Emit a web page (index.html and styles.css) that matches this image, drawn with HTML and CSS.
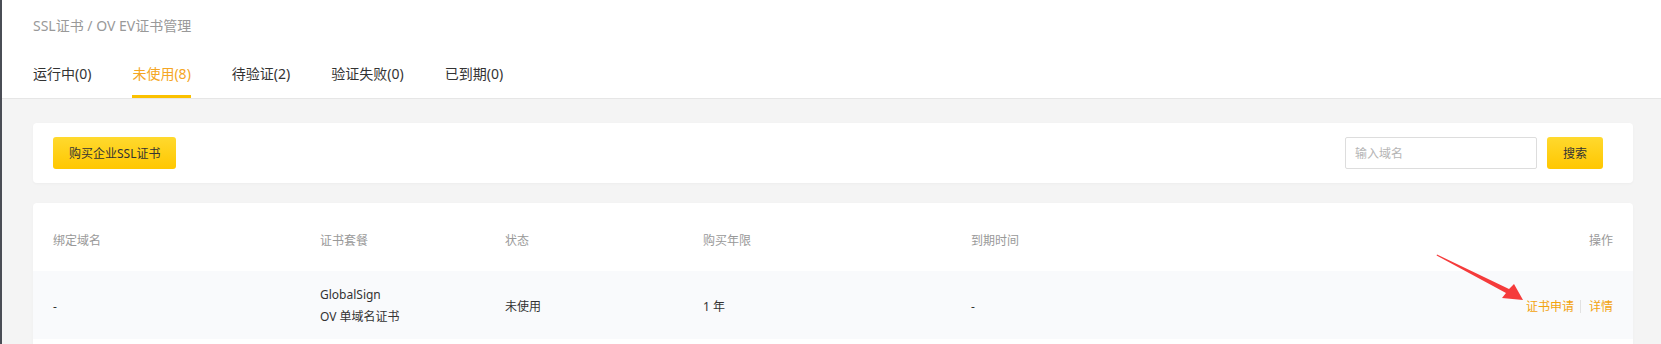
FILE: index.html
```html
<!DOCTYPE html>
<html lang="zh-CN">
<head>
<meta charset="utf-8">
<title>OV EV证书管理</title>
<link rel="stylesheet" href="styles.css">
</head>
<body>
<div class="page">
  <header class="header">
    <div class="breadcrumb">SSL证书 / OV EV证书管理</div>
    <nav class="tabs">
      <span class="tab">运行中(0)</span>
      <span class="tab active">未使用(8)</span>
      <span class="tab">待验证(2)</span>
      <span class="tab">验证失败(0)</span>
      <span class="tab">已到期(0)</span>
    </nav>
  </header>
  <main class="main">
    <section class="card toolbar">
      <button class="btn">购买企业SSL证书</button>
      <div class="search">
        <input class="search-input" type="text" placeholder="输入域名">
        <button class="btn btn-search">搜索</button>
      </div>
    </section>
    <section class="card table">
      <div class="row head">
        <div>绑定域名</div>
        <div>证书套餐</div>
        <div>状态</div>
        <div>购买年限</div>
        <div>到期时间</div>
        <div class="ops">操作</div>
      </div>
      <div class="row data">
        <div>-</div>
        <div class="pkg"><div>GlobalSign</div><div>OV 单域名证书</div></div>
        <div>未使用</div>
        <div>1 年</div>
        <div>-</div>
        <div class="ops"><a class="link">证书申请</a><span class="sep"></span><a class="link">详情</a></div>
      </div>
    </section>
  </main>
  <svg class="arrow" width="100" height="55" viewBox="1430 250 100 55" aria-hidden="true">
    <polygon points="1437,254.4 1509,289 1514,284 1523,300 1502,298 1506,293 1436.6,255.6" fill="#f53b3b"/>
  </svg>
</div>
</body>
</html>
```
FILE: styles.css
```css
* { box-sizing: border-box; }
html, body { margin: 0; padding: 0; }
body {
  font-family: "Noto Sans", "Noto Sans CJK SC", sans-serif;
  color: #333;
  background: #f4f4f4;
}
.page {
  position: relative;
  min-height: 344px;
  border-left: 2px solid #4a4d55;
  background: #f4f4f4;
}
.header {
  background: #fff;
  padding: 16px 0 0 31px;
  border-bottom: 1px solid #e6e6e6;
}
.breadcrumb {
  font-size: 14px;
  line-height: 20px;
  color: #999;
}
.tabs {
  display: flex;
  gap: 41px;
  margin-top: 13px;
}
.tab {
  font-size: 14px;
  line-height: 20px;
  padding: 15px 0 11px;
  border-bottom: 3px solid transparent;
  color: #333;
}
.tab.active {
  color: #f5a623;
  border-bottom-color: #fbc100;
}
.main {
  padding: 24px 28px 0 31px;
  display: flex;
  flex-direction: column;
  gap: 20px;
}
.card {
  background: #fff;
  border-radius: 4px;
  box-shadow: 0 1px 3px rgba(0,0,0,0.03);
}
.toolbar {
  display: flex;
  justify-content: space-between;
  align-items: center;
  padding: 14px 30px 14px 20px;
}
.btn {
  height: 32px;
  padding: 0 16px;
  border: none;
  border-radius: 3px;
  background: linear-gradient(#ffd92e, #ffc700);
  font-family: inherit;
  font-size: 12px;
  color: #333;
}
.search {
  display: flex;
  gap: 10px;
}
.search-input {
  width: 192px;
  height: 32px;
  border: 1px solid #ddd;
  border-radius: 2px;
  padding: 0 9px;
  font-family: inherit;
  font-size: 12px;
  color: #333;
  outline: none;
}
.search-input::placeholder { color: #b5b5b5; }
.btn-search {
  width: 56px;
  padding: 0;
}
.table {
  padding-bottom: 20px;
}
.row {
  display: grid;
  grid-template-columns: 267px 185px 198px 268px 1fr auto;
  align-items: center;
  padding: 0 20px;
  height: 68px;
  font-size: 12px;
}
.row.head {
  color: #999;
  padding-top: 5px;
}
.row.data {
  background: #f9fafc;
  color: #333;
  padding-top: 2px;
}
.pkg div { line-height: 22px; }
.ops {
  display: flex;
  justify-content: flex-end;
  align-items: center;
}
.link {
  color: #f2a30f;
}
.sep {
  display: inline-block;
  width: 1px;
  height: 13px;
  background: #e2e2e2;
  margin: 0 8px 0 6px;
}
.arrow {
  position: absolute;
  left: 1428px;
  top: 250px;
}
```
